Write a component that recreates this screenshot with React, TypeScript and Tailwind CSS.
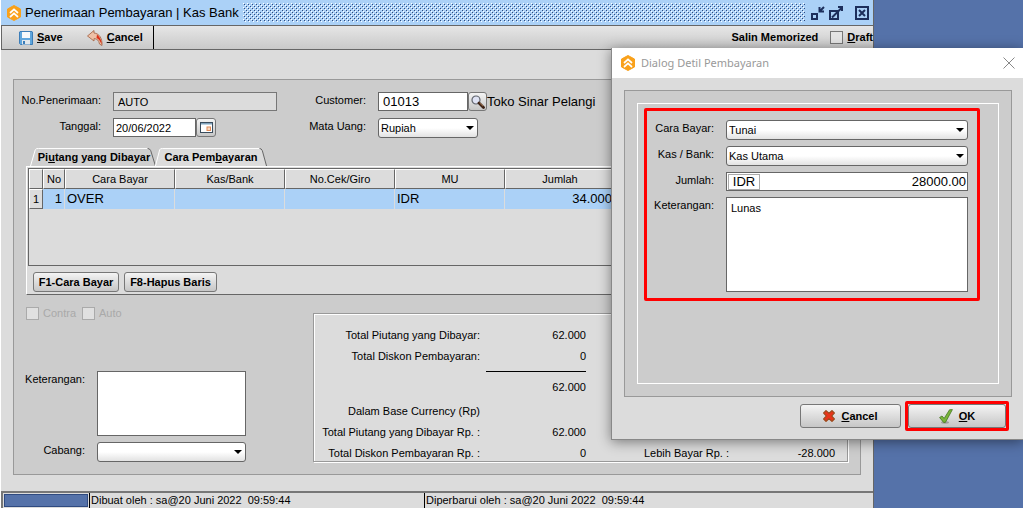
import React from "react";

function Logo({ className }: { className?: string }) {
  return (
    <svg viewBox="0 0 14 16" className={className} aria-hidden="true">
      <path d="M7 0.5 L13.5 4 V12 L7 15.5 L0.5 12 V4 Z" fill="#f9a11b" stroke="#f9a11b" strokeLinejoin="round" />
      <path d="M3 8 L7 4.4 L11 8" fill="none" stroke="#fff" strokeWidth="1.7" />
      <path d="M3 12 L7 8.4 L11 12" fill="none" stroke="#fff" strokeWidth="1.7" />
    </svg>
  );
}

function SaveIcon() {
  return (
    <svg viewBox="0 0 14 14" className="h-3.5 w-3.5" aria-hidden="true">
      <path d="M1 0.5 H13 L13.5 1 V13.5 H1.5 L0.5 12.5 V1 Z" fill="#5fa6dd" stroke="#3c7db8" />
      <rect x="3" y="1" width="8" height="6" fill="#f6f9fb" />
      <rect x="3" y="9" width="8" height="4.5" fill="#e3e8ec" />
      <rect x="4" y="10" width="2" height="3" fill="#3c7db8" />
    </svg>
  );
}

function UndoIcon() {
  return (
    <svg viewBox="0 0 16 16" className="h-4 w-4" aria-hidden="true">
      <path d="M0.5 6 L7 0.5 V3 C12 3.5 15.5 8 15 15.5 L12.5 14 C12 10.5 10 8.6 7 8.6 V11 Z" fill="#eec0a6" stroke="#a8694b" strokeWidth="0.9" />
      <path d="M10 4.500 C13 7 14.8 10.500 14.700 14.500 C13 11 12 9 9.500 8 Z" fill="#dc3018" />
    </svg>
  );
}

function CalendarIcon() {
  return (
    <svg viewBox="0 0 13 11" className="h-[11px] w-[13px]" aria-hidden="true">
      <rect x="0.5" y="0.5" width="12" height="10" fill="#fff" stroke="#3a4c5c" />
      <rect x="1" y="1" width="11" height="1.5" fill="#7fa3bd" />
      <rect x="7" y="5" width="3.500" height="3.500" fill="#f8d8c0" stroke="#e08a55" strokeWidth="1" />
    </svg>
  );
}

function SearchIcon() {
  return (
    <svg viewBox="0 0 14 14" className="h-3.5 w-3.5" aria-hidden="true">
      <circle cx="5" cy="5" r="4" fill="#dfe3f4" stroke="#5f646c" strokeWidth="1.2" />
      <path d="M8 8 L12.500 12.500" stroke="#3a2014" strokeWidth="2.8" strokeLinecap="round" />
      <path d="M8.500 7.800 L12 11.200" stroke="#c08a5a" strokeWidth="0.8" />
    </svg>
  );
}

function CrossIcon() {
  return (
    <svg viewBox="0 0 12 12" className="h-3 w-3" aria-hidden="true">
      <path d="M3 0.6 L6 3.200 L9 0.6 L11.400 3 L8.800 6 L11.400 9 L9 11.400 L6 8.800 L3 11.400 L0.6 9 L3.200 6 L0.6 3 Z" fill="#e8341a" stroke="#9a4a1c" strokeWidth="1.1" />
    </svg>
  );
}

function CheckIcon() {
  return (
    <svg viewBox="0 0 14 15" className="h-[15px] w-3.5" aria-hidden="true">
      <ellipse cx="6" cy="13.500" rx="4" ry="1.200" fill="#9d9d9d" />
      <path d="M0.6 8.500 L3 7 L5.200 9.400 L10.500 0.8 L13.400 0.6 L6.400 13.400 H4.600 Z" fill="#79b53a" stroke="#43761f" strokeWidth="0.8" />
    </svg>
  );
}

function TitleTexture() {
  return (
    <svg className="h-[19px] min-w-0 flex-1" aria-hidden="true">
      <defs>
        <pattern id="grip" width="4" height="4" patternUnits="userSpaceOnUse">
          <rect x="0" y="0" width="1" height="1" fill="#fff" />
          <rect x="2" y="2" width="1" height="1" fill="#fff" />
          <rect x="1" y="1" width="1" height="1" fill="#2f4a80" />
          <rect x="3" y="3" width="1" height="1" fill="#2f4a80" />
        </pattern>
      </defs>
      <rect width="100%" height="100%" fill="url(#grip)" />
    </svg>
  );
}

function Select({ id, value, className }: { id: string; value: string; className: string }) {
  return (
    <div className={`relative h-5 ${className}`}>
      <select
        id={id}
        defaultValue={value}
        className="h-full w-full appearance-none rounded-[3px] border border-[#666] bg-linear-to-b from-white from-50% to-[#e2e2e2] pl-0.5 text-[11px] leading-4"
      >
        <option>{value}</option>
      </select>
      <svg viewBox="0 0 8 4" className="pointer-events-none absolute top-2 right-1 h-1 w-2" aria-hidden="true">
        <path d="M0 0 H8 L4 4 Z" fill="#000" />
      </svg>
    </div>
  );
}

const BUTTON = "flex items-center justify-center rounded-[3px] border border-[#777] bg-linear-to-b from-[#f4f4f4] to-[#c6c6c6] font-bold";
const FIELD = "block rounded-none border border-[#666] bg-white";
const LABEL = "flex justify-end whitespace-nowrap leading-4";

function TitleBar() {
  return (
    <header className="flex h-[26px] items-center border-b border-[#666] bg-[#abd1f7] pr-1 pl-1.5">
      <Logo className="h-4 w-3.5" />
      <h1 className="mr-1 ml-1 text-[13px] leading-5 whitespace-nowrap">Penerimaan Pembayaran | Kas Bank</h1>
      <TitleTexture />
      <button aria-label="Minimize" className="ml-1.5">
        <svg viewBox="0 0 14 14" className="h-3.5 w-3.5">
          <path d="M1 8 H6 V13 H1 Z M13 1 L9 5 M8.500 1 V5.500 H13" fill="none" stroke="#1d2f5c" strokeWidth="2" />
        </svg>
      </button>
      <button aria-label="Maximize" className="ml-1">
        <svg viewBox="0 0 14 14" className="h-3.5 w-3.5">
          <path d="M1 5 H9 V13 H1 Z M3 11.500 L13 1.500 M9 1 H13 V5" fill="none" stroke="#1d2f5c" strokeWidth="2" />
        </svg>
      </button>
      <button aria-label="Close" className="ml-3">
        <svg viewBox="0 0 14 14" className="h-3.5 w-3.5">
          <path d="M1 1 H13 V13 H1 Z M4 4 L10 10 M10 4 L4 10" fill="none" stroke="#1d2f5c" strokeWidth="2" />
        </svg>
      </button>
    </header>
  );
}

function Toolbar() {
  return (
    <div className="flex h-6 items-stretch border-b border-l border-[#666] bg-linear-to-b from-[#e6e6e6] to-[#c9c9c9] font-bold">
      <div className="flex items-center gap-6 border-r border-black pr-2.5 pl-[17px]">
        <button className="flex items-center gap-1"><SaveIcon /><span><u>S</u>ave</span></button>
        <button className="flex items-center gap-1"><UndoIcon /><span><u>C</u>ancel</span></button>
      </div>
      <div className="ml-auto flex items-center gap-3">
        <button>Salin Memorized</button>
        <label className="flex items-center gap-1">
          <input type="checkbox" className="h-[13px] w-[13px] appearance-none border border-[#777] bg-[#e4e4e4]" />
          <span><u>D</u>raft</span>
        </label>
      </div>
    </div>
  );
}

function ReceiptFields() {
  return (
    <div className="grid grid-cols-[75px_164px_77px_auto] gap-x-3 gap-y-[7px]">
      <label htmlFor="receipt" className={LABEL}>No.Penerimaan:</label>
      <input id="receipt" readOnly defaultValue="AUTO" className="h-[19px] w-full border border-[#777] bg-[#dcdcdc] px-1 text-[11px]" />
      <label htmlFor="customer" className={LABEL}>Customer:</label>
      <div className="flex items-center">
        <input id="customer" defaultValue="01013" className={`${FIELD} h-[19px] w-[90px] px-1 text-[13px]`} />
        <button aria-label="Search customer" className={`${BUTTON} h-[19px] w-[19px]`}><SearchIcon /></button>
        <span className="text-[13px] leading-4 whitespace-nowrap">Toko Sinar Pelangi</span>
      </div>
      <label htmlFor="date" className={LABEL}>Tanggal:</label>
      <div className="flex h-[19px] items-center">
        <input id="date" defaultValue="20/06/2022" className={`${FIELD} h-[19px] w-[83px] px-0.5 text-[11px]`} />
        <button aria-label="Pick date" className={`${BUTTON} h-[19px] w-5`}><CalendarIcon /></button>
      </div>
      <label htmlFor="currency" className={LABEL}>Mata Uang:</label>
      <Select id="currency" value="Rupiah" className="w-[100px]" />
    </div>
  );
}

function TabShape({ active }: { active?: boolean }) {
  return (
    <svg viewBox="0 0 120 20" preserveAspectRatio="none" className="absolute inset-0 h-full w-full" aria-hidden="true">
      <path d="M0 20 L5 2 Q5.500 0.5 8 0.5 H111 Q114 0.5 115 3 L119.500 20 Z" fill={active ? "#dcdcdc" : "#cfcfcf"} />
      <path d="M0.5 20 L5 2 Q5.500 0.5 8 0.5 H112" fill="none" stroke="#fff" vectorEffect="non-scaling-stroke" />
      <path d="M112 0.5 Q114 0.5 115 3 L119.500 20" fill="none" stroke="#666" vectorEffect="non-scaling-stroke" />
    </svg>
  );
}

const HEAD = "border-t border-r border-b border-l border-t-white border-r-[#666] border-b-[#666] border-l-white p-0 text-center font-normal";
const CELL = "border-r border-[#dcdcdc] bg-[#abd1f7] px-0.5 py-0 text-[13px] leading-5";

function PaymentTabs() {
  return (
    <section className="pt-2.5">
      <div role="tablist" className="flex pl-1 font-bold">
        <button role="tab" aria-selected="false" className="relative h-[18px] w-[126px] pl-0.5">
          <TabShape />
          <span className="relative">Pi<u>u</u>tang yang Dibayar</span>
        </button>
        <button role="tab" aria-selected="true" className="relative -ml-px h-[18px] w-[112px]">
          <TabShape active />
          <span className="relative">Cara Pem<u>b</u>ayaran</span>
        </button>
      </div>
      <div className="border-t border-b border-l border-t-white border-b-[#666] border-l-white bg-[#dcdcdc] pt-px pl-px">
        <div className="h-[98px] overflow-hidden border border-[#666]">
          <table className="w-full table-fixed border-separate border-spacing-0">
            <colgroup>
              <col className="w-3.5" /><col className="w-[22px]" />
              <col className="w-[110px]" /><col className="w-[110px]" /><col className="w-[110px]" />
              <col className="w-[110px]" /><col className="w-[110px]" /><col />
            </colgroup>
            <thead>
              <tr className="h-5">
                <th className={HEAD} /><th className={HEAD}>No</th><th className={HEAD}>Cara Bayar</th>
                <th className={HEAD}>Kas/Bank</th><th className={HEAD}>No.Cek/Giro</th>
                <th className={HEAD}>MU</th><th className={HEAD}>Jumlah</th><th className={HEAD} />
              </tr>
            </thead>
            <tbody>
              <tr className="h-5">
                <th className={HEAD}>1</th><td className={`${CELL} text-right`}>1</td><td className={CELL}>OVER</td>
                <td className={CELL} /><td className={CELL} /><td className={CELL}>IDR</td>
                <td className={`${CELL} text-right`}>34.000</td><td className={CELL} />
              </tr>
            </tbody>
          </table>
        </div>
        <div className="flex gap-[5px] pt-1.5 pb-0.5 pl-[5px]">
          <button className={`${BUTTON} h-5 w-[86px]`}>F1-Cara Bayar</button>
          <button className={`${BUTTON} h-5 w-[93px]`}>F8-Hapus Baris</button>
        </div>
      </div>
    </section>
  );
}

function NotesForm() {
  return (
    <div className="w-[287px] shrink-0">
      <div className="flex gap-1.5 text-[#a9a9a9]">
        {["Contra", "Auto"].map((name) => (
          <label key={name} className="flex items-center gap-1 leading-4">
            <input type="checkbox" disabled className="h-[13px] w-[13px] appearance-none border border-[#aaa] bg-[#e0e0e0]" />
            {name}
          </label>
        ))}
      </div>
      <div className="mt-[50px] grid grid-cols-[59px_149px] gap-x-3 gap-y-1.5">
        <label htmlFor="notes" className={LABEL}>Keterangan:</label>
        <textarea id="notes" className={`${FIELD} h-[65px] w-full resize-none`} />
        <label htmlFor="branch" className={LABEL}>Cabang:</label>
        <Select id="branch" value="" className="w-full" />
      </div>
    </div>
  );
}

function Totals() {
  return (
    <div className="mt-2 h-[149px] flex-1 border border-[#999] shadow-[1px_1px_0_#fff]">
      <dl className="grid h-full grid-cols-[165px_100px_1fr_100px] content-start gap-x-1.5 gap-y-[5px] overflow-hidden border-t border-l border-white bg-[#dcdcdc] pt-3 pr-3 text-right leading-4">
        <dt>Total Piutang yang Dibayar:</dt><dd>62.000</dd>
        <dt className="col-start-1">Total Diskon Pembayaran:</dt><dd>0</dd>
        <dd className="col-start-2 mt-0.5 border-t border-black pt-[7px]">62.000</dd>
        <dt className="col-start-1 mt-[3px]">Dalam Base Currency (Rp)</dt>
        <dt className="col-start-1">Total Piutang yang Dibayar Rp. :</dt><dd>62.000</dd>
        <dt className="col-start-1">Total Diskon Pembayaran Rp. :</dt><dd>0</dd>
        <dt>Lebih Bayar Rp. :</dt><dd>-28.000</dd>
      </dl>
    </div>
  );
}

function StatusBar() {
  return (
    <footer className="flex h-[17px] border-t-2 border-l-2 border-[#777] leading-[15px]">
      <div className="m-px w-[84px] border border-[#2f4a80] bg-[#5572a9]" />
      <div className="w-[335px] border-l border-black pl-px whitespace-pre">Dibuat oleh : sa@20 Juni 2022  09:59:44</div>
      <div className="flex-1 border-l border-black pl-px whitespace-pre">Diperbarui oleh : sa@20 Juni 2022  09:59:44</div>
    </footer>
  );
}

function PaymentDialog() {
  return (
    <section role="dialog" aria-label="Dialog Detil Pembayaran" className="absolute top-12 right-0 w-[412px] border-b border-l border-[#888] bg-[#dcdcdc] shadow-[0_2px_12px_rgba(0,0,0,0.45)]">
      <header className="flex h-[30px] items-center bg-white pr-2 pl-[9px]">
        <Logo className="h-4 w-3.5" />
        <h2 className="ml-1.5 font-['Noto_Sans',sans-serif] text-[11px] leading-4 text-[#999]">Dialog Detil Pembayaran</h2>
        <button aria-label="Close dialog" className="ml-auto">
          <svg viewBox="0 0 12 12" className="h-3 w-3"><path d="M0.5 0.5 L11.500 11.500 M11.500 0.5 L0.5 11.500" stroke="#888" /></svg>
        </button>
      </header>
      <div className="pt-3 pr-[11px] pb-2 pl-3">
        <div className="border border-[#999] bg-[#ccc] p-3">
          <div className="h-[281px] border border-white pt-1 pr-[18px] pl-1.5">
            <div className="grid h-[193px] grid-cols-[67px_1fr] content-start gap-x-3 gap-y-1.5 rounded-[2px] border-[3px] border-[#f00] py-[9px] pr-[9px]">
              <label htmlFor="method" className={LABEL}>Cara Bayar:</label>
              <Select id="method" value="Tunai" className="w-full" />
              <label htmlFor="bank" className={LABEL}>Kas / Bank:</label>
              <Select id="bank" value="Kas Utama" className="w-full" />
              <label htmlFor="amount" className={LABEL}>Jumlah:</label>
              <div className={`${FIELD} flex h-[19px] items-center pr-px pl-px`}>
                <span className="h-4 w-8 border border-[#aaa] text-center text-[13px] leading-3.5">IDR</span>
                <input id="amount" defaultValue="28000.00" className="min-w-0 flex-1 text-right text-[13px]" />
              </div>
              <label htmlFor="detail" className={LABEL}>Keterangan:</label>
              <textarea id="detail" defaultValue="Lunas" className={`${FIELD} h-[95px] w-full resize-none px-1 py-0.5 leading-4`} />
            </div>
          </div>
        </div>
      </div>
      <div className="-mt-1 flex items-center justify-end gap-1 pr-3.5 pb-2">
        <button className={`${BUTTON} h-6 w-[101px] gap-1.5`}><CrossIcon /><span><u>C</u>ancel</span></button>
        <div className="rounded-[2px] border-[3px] border-[#f00]">
          <button className={`${BUTTON} h-6 w-[98px] gap-1.5`}><CheckIcon /><span><u>O</u>K</span></button>
        </div>
      </div>
    </section>
  );
}

export default function App() {
  return (
    <div className="relative min-h-screen overflow-hidden bg-[#5572a9] pr-[149px] font-['Liberation_Sans',Arial,sans-serif] text-[11px] text-black">
      <main className="flex min-h-screen flex-col border-r border-l border-r-[#666] border-l-white bg-[#dcdcdc]">
        <TitleBar />
        <Toolbar />
        <div className="flex-1 px-3 pt-[29px] pb-4">
          <div className="border border-[#999] bg-[#ccc] px-3 pt-3 pb-3">
            <ReceiptFields />
            <PaymentTabs />
            <div className="flex pt-2.5">
              <NotesForm />
              <Totals />
            </div>
          </div>
        </div>
        <StatusBar />
      </main>
      <PaymentDialog />
    </div>
  );
}
